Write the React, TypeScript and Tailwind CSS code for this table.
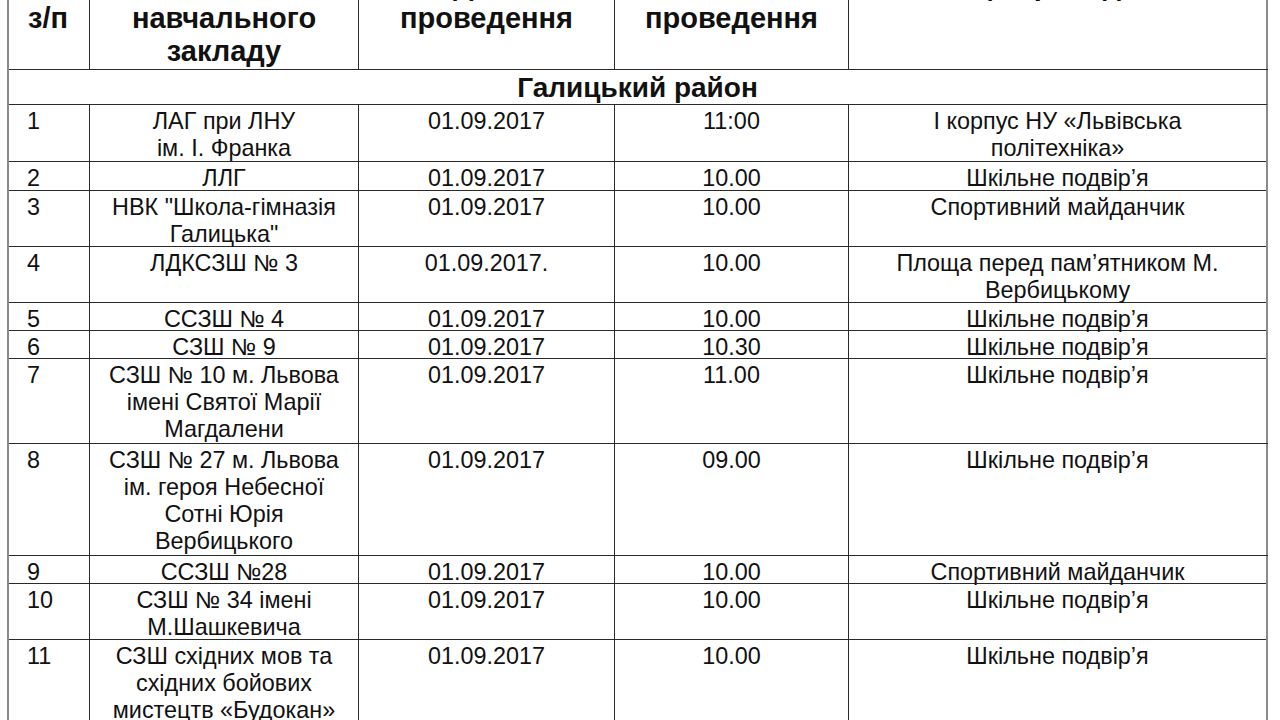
import React from 'react';

type Row = {
  n: string;
  school: string[];
  date: string;
  time: string;
  place: string[];
  h: string;
};

const YARD = 'Шкільне подвір’я';
const SPORT = 'Спортивний майданчик';

// висоти рядків підібрані під скан таблиці
const ROWS: Row[] = [
  { n: '1', school: ['ЛАГ при ЛНУ', 'ім. І. Франка'], date: '01.09.2017', time: '11:00', place: ['І корпус НУ «Львівська', 'політехніка»'], h: 'h-[57px]' },
  { n: '2', school: ['ЛЛГ'], date: '01.09.2017', time: '10.00', place: [YARD], h: 'h-[29px]' },
  { n: '3', school: ['НВК "Школа-гімназія', 'Галицька"'], date: '01.09.2017', time: '10.00', place: [SPORT], h: 'h-[56px]' },
  { n: '4', school: ['ЛДКСЗШ № 3'], date: '01.09.2017.', time: '10.00', place: ['Площа перед пам’ятником М.', 'Вербицькому'], h: 'h-[56px]' },
  { n: '5', school: ['ССЗШ № 4'], date: '01.09.2017', time: '10.00', place: [YARD], h: 'h-[28px]' },
  { n: '6', school: ['СЗШ № 9'], date: '01.09.2017', time: '10.30', place: [YARD], h: 'h-[28px]' },
  { n: '7', school: ['СЗШ № 10 м. Львова', 'імені Святої Марії', 'Магдалени'], date: '01.09.2017', time: '11.00', place: [YARD], h: 'h-[85px]' },
  { n: '8', school: ['СЗШ № 27 м. Львова', 'ім. героя Небесної', 'Сотні Юрія', 'Вербицького'], date: '01.09.2017', time: '09.00', place: [YARD], h: 'h-[112px]' },
  { n: '9', school: ['ССЗШ №28'], date: '01.09.2017', time: '10.00', place: [SPORT], h: 'h-[28px]' },
  { n: '10', school: ['СЗШ № 34 імені', 'М.Шашкевича'], date: '01.09.2017', time: '10.00', place: [YARD], h: 'h-[56px]' },
  { n: '11', school: ['СЗШ східних мов та', 'східних бойових', 'мистецтв «Будокан»'], date: '01.09.2017', time: '10.00', place: [YARD], h: 'h-[112px]' },
];

const GRID = 'grid grid-cols-[81px_269px_256px_234px_419px]';
const CELL = 'border-r border-[#2a2a2a] pt-[3px] leading-[27px] text-center';
const LAST = 'border-r-2 border-[#8a8a8a] pt-[3px] leading-[27px] text-center';

function Lines({ lines }: { lines: string[] }) {
  return (
    <>
      {lines.map((l) => (
        <div key={l} className="whitespace-nowrap">
          {l}
        </div>
      ))}
    </>
  );
}

export default function App() {
  return (
    <div className="min-h-screen bg-white overflow-hidden text-[#111] font-['Liberation_Sans',Arial,sans-serif]">
      <div className="ml-[7px] -mt-[32px] w-[1261px] border-l-2 border-[#8a8a8a]">
        {/* шапка — верх обрізаний краєм сторінки */}
        <div className={`${GRID} h-[102px] border-y border-[#2a2a2a] font-bold text-[29px] leading-[33px]`}>
          <div className="border-r border-[#2a2a2a] pl-[19px]">
            <div>№</div>
            <div>з/п</div>
          </div>
          <div className="border-r border-[#2a2a2a] text-center">
            <div>Назва</div>
            <div>навчального</div>
            <div>закладу</div>
          </div>
          <div className="border-r border-[#2a2a2a] text-center">
            <div>Дата</div>
            <div>проведення</div>
          </div>
          <div className="border-r border-[#2a2a2a] text-center">
            <div>Час</div>
            <div>проведення</div>
          </div>
          <div className="border-r-2 border-[#8a8a8a] text-center">
            <div>Місце проведення</div>
          </div>
        </div>

        <div className="h-[35px] border-b border-[#2a2a2a] border-r-2 border-r-[#8a8a8a] flex items-center justify-center font-bold text-[28px] leading-[33px]">
          Галицький район
        </div>

        {ROWS.map((r) => (
          <div key={r.n} className={`${GRID} ${r.h} border-b border-[#2a2a2a] text-[23.4px]`}>
            <div className="border-r border-[#2a2a2a] pt-[3px] pl-[18px] leading-[27px]">{r.n}</div>
            <div className={CELL}>
              <Lines lines={r.school} />
            </div>
            <div className={CELL}>{r.date}</div>
            <div className={CELL}>{r.time}</div>
            <div className={LAST}>
              <Lines lines={r.place} />
            </div>
          </div>
        ))}
      </div>
    </div>
  );
}
